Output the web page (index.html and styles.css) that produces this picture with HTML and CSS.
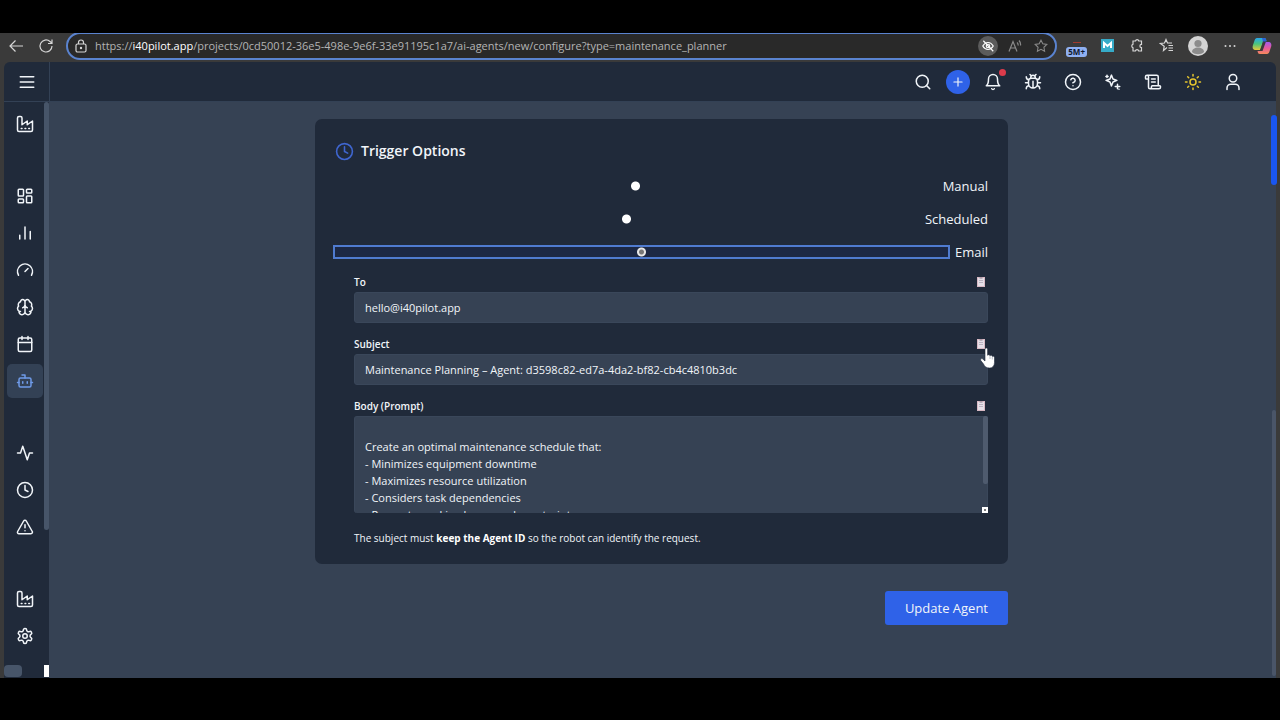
FILE: index.html
```html
<!DOCTYPE html>
<html lang="en">
<head>
  <meta charset="UTF-8" />
  <meta name="viewport" content="width=device-width, initial-scale=1.0"/>
  <title>Configure Agent</title>
  <link rel="stylesheet" href="styles.css">
</head>
<body>
  <!-- Browser bar -->
  <div class="browser-bar">
    <button class="bar-btn" aria-label="Back"><svg width="16" height="16" viewBox="0 0 16 16"><path d="M15 8H2M7.500 2.500L2 8l5.500 5.500"/></svg></button>
    <button class="bar-btn" aria-label="Reload"><svg width="16" height="16" viewBox="0 0 16 16"><path d="M14 8a6 6 0 1 1-2-4.500L14 5.300M14 1.500v4h-4"/></svg></button>
    <div class="address">
      <svg width="14" height="14" viewBox="0 0 14 14"><rect x="2" y="5" width="10" height="8" rx="1.500"/><path d="M4.500 5V3.500a2.500 2.500 0 0 1 5 0V5"/><circle cx="7" cy="9" r=".6"/></svg>
      <div class="url">https://<span>i40pilot.app</span>/projects/0cd50012-36e5-498e-9e6f-33e91195c1a7/ai-agents/new/configure?type=maintenance_planner</div>
      <button class="eye-btn" aria-label="Tracking prevention"><svg width="14" height="14" viewBox="0 0 24 24"><path d="M3 12s3.500-6 9-6 9 6 9 6-3.500 6-9 6-9-6-9-6z"/><circle cx="12" cy="12" r="3"/><path d="M4 3l17 18"/></svg></button>
      <button class="bar-btn dim" aria-label="Read aloud"><svg width="14" height="14" viewBox="0 0 14 14"><path d="M1 12.500L5 2.500l4 10M2.500 9h5M9 3.500a3 3 0 0 1 1 3M11 1.500a6 6 0 0 1 1.500 5"/></svg></button>
      <button class="bar-btn dim" aria-label="Favorite"><svg width="14" height="14" viewBox="0 0 24 24"><path class="thick" d="M12 2l3.100 6.300 6.900 1-5 4.900 1.200 6.800-6.200-3.200L5.800 21 7 14.200 2 9.300l6.900-1z"/></svg></button>
    </div>
    <div class="extensions">
      <div class="counter"><i></i><span>5M+</span></div>
      <div class="m-ext"><svg width="13" height="13" viewBox="0 0 13 13"><path d="M3 9V4l3.500 3L10 4v5"/></svg></div>
      <button class="bar-btn" aria-label="Extensions"><svg width="15" height="15" viewBox="0 0 15 15"><path d="M4 3h2.500a1.700 1.700 0 0 1 3.300 0H12.500v3.300a1.600 1.600 0 0 0 0 3.200V13H9.700a1.700 1.700 0 0 0-3.300 0H4V9.700a1.800 1.800 0 0 1 0-3.400z"/></svg></button>
      <button class="bar-btn" aria-label="Favorites"><svg width="15" height="15" viewBox="0 0 15 15"><path d="M8 9.500l-3.500 3 .7-4.300L1.500 5.500l4-.5L7 1.500 8.500 5H13M9.500 7.500H14M9.500 10H14M9.500 12.500H14"/></svg></button>
      <div class="avatar"><svg width="20" height="20" viewBox="0 0 20 20"><circle cx="10" cy="10" r="10" fill="#d4d4d4"/><circle cx="10" cy="7.500" r="3.600" fill="#8c8c8c"/><path d="M4 16c0-6 12-6 12 0-3 3-9 3-12 0z" fill="#8c8c8c"/></svg></div>
      <button class="bar-btn" aria-label="More"><svg width="14" height="14" viewBox="0 0 14 14"><circle class="dot" cx="2.500" cy="7" r="1"/><circle class="dot" cx="7" cy="7" r="1"/><circle class="dot" cx="11.500" cy="7" r="1"/></svg></button>
      <div class="copilot">
        <svg width="20" height="18" viewBox="0 0 20 18">
          <defs>
            <linearGradient id="cpA" x1="0" y1="0" x2="0" y2="1"><stop offset="0" stop-color="#28a8ee"/><stop offset=".5" stop-color="#4cc47a"/><stop offset="1" stop-color="#e8c83c"/></linearGradient>
            <linearGradient id="cpB" x1="0" y1="0" x2="0" y2="1"><stop offset="0" stop-color="#a35af0"/><stop offset=".5" stop-color="#e65a9c"/><stop offset="1" stop-color="#f58a5a"/></linearGradient>
          </defs>
          <path d="M6 1h6c2 0 2 1 2.500 3H11L8.500 13H4C1 13 0 11 1 8l1.700-5C3.300 1.500 4 1 6 1z" fill="url(#cpA)"/>
          <path d="M14 17H8c-2 0-2-1-2.500-3H9l2.500-9H16c3 0 4 2 3 5l-1.700 5c-.6 1.500-1.300 2-3.300 2z" fill="url(#cpB)"/>
          <path d="M11.500 4.500H14L10.500 14H7.500z" fill="#3b3b3b"/>
          <path d="M10 1h2c2 0 2 1 2.500 3.500H11z" fill="#2b62d8"/>
        </svg>
      </div>
    </div>
  </div>

  <div class="app">
    <header class="topbar">
      <button class="menu-btn" aria-label="Menu"><svg class="icon" viewBox="0 0 24 24"><path d="M3 5h18M3 12h18M3 19h18"/></svg></button>
      <div class="actions">
        <div class="quick">
          <button aria-label="Search"><svg class="icon" viewBox="0 0 24 24"><circle cx="11" cy="11" r="8"/><path d="M21 21l-4.300-4.300"/></svg></button>
          <button class="add-btn" aria-label="Add"><svg class="icon" viewBox="0 0 24 24"><path d="M5 12h14M12 5v14"/></svg></button>
          <button class="bell-btn" aria-label="Notifications"><svg class="icon" viewBox="0 0 24 24"><path d="M6 8a6 6 0 0 1 12 0c0 7 3 9 3 9H3s3-2 3-9M10.300 21a1.940 1.940 0 0 0 3.400 0"/></svg><span class="badge"></span></button>
        </div>
        <button aria-label="Report bug"><svg class="icon" viewBox="0 0 24 24"><path d="M8 2l1.900 1.900M14.100 3.900L16 2M9 7.100V6a3 3 0 1 1 6 0v1.100M12 20a6 6 0 0 1-6-6v-3a4 4 0 0 1 4-4h4a4 4 0 0 1 4 4v3a6 6 0 0 1-6 6zM12 20v-9M6.500 9C4.600 8.800 3 7.100 3 5M6 13H2M3 21c0-2.100 1.700-3.900 3.800-4M21 5c0 2.100-1.600 3.800-3.500 4M22 13h-4M17.200 17c2.100.1 3.800 1.900 3.800 4"/></svg></button>
        <button aria-label="Help"><svg class="icon" viewBox="0 0 24 24"><circle cx="12" cy="12" r="10"/><path d="M9.100 9a3 3 0 0 1 5.800 1c0 2-3 3-3 3M12 17h.010"/></svg></button>
        <button aria-label="Assistant"><svg class="icon" viewBox="0 0 24 24"><path d="M9.900 2.800L8 8 2.800 9.900 8 12l1.900 5.200L12 12l5.200-2.100L12 8zM18 15v6M15 18h6M20 21.500v.010M4 3v3M2.500 4.500h3"/></svg></button>
        <button aria-label="Logs"><svg class="icon" viewBox="0 0 24 24"><path d="M15 12h-5M15 8h-5M19 17V5a2 2 0 0 0-2-2H4M8 21h12a2 2 0 0 0 2-2v-1a1 1 0 0 0-1-1H11a1 1 0 0 0-1 1v1a2 2 0 1 1-4 0V5a2 2 0 1 0-4 0v2a1 1 0 0 0 1 1h3"/></svg></button>
        <button class="theme-btn" aria-label="Theme"><svg class="icon" viewBox="0 0 24 24"><circle cx="12" cy="12" r="4"/><path d="M12 2v2M12 20v2M4.900 4.900l1.400 1.400M17.700 17.700l1.400 1.400M2 12h2M20 12h2M6.300 17.700l-1.400 1.400M19.100 4.900l-1.400 1.400"/></svg></button>
        <button aria-label="Account"><svg class="icon" viewBox="0 0 24 24"><circle cx="12" cy="7" r="5"/><path d="M20 22v-2a5 5 0 0 0-5-5H9a5 5 0 0 0-5 5v2"/></svg></button>
      </div>
    </header>

    <div class="body-row">
      <nav class="sidebar">
        <div class="group">
          <a href="#" aria-label="Plant"><svg class="icon" viewBox="0 0 24 24"><path d="M2 20a2 2 0 0 0 2 2h16a2 2 0 0 0 2-2V8l-7 5V8l-7 5V4a2 2 0 0 0-2-2H4a2 2 0 0 0-2 2zM17 18h1M12 18h1M7 18h1"/></svg></a>
        </div>
        <div class="group">
          <a href="#" aria-label="Dashboard"><svg class="icon" viewBox="0 0 24 24"><rect x="3" y="3" width="7" height="9" rx="1"/><rect x="14" y="3" width="7" height="5" rx="1"/><rect x="14" y="12" width="7" height="9" rx="1"/><rect x="3" y="16" width="7" height="5" rx="1"/></svg></a>
          <a href="#" aria-label="Reports"><svg class="icon" viewBox="0 0 24 24"><path d="M5 20v-5M12 20V4M19 20V10"/></svg></a>
          <a href="#" aria-label="Performance"><svg class="icon" viewBox="0 0 24 24"><path d="M12 14l4-4M3.340 19a10 10 0 1 1 17.320 0"/></svg></a>
          <a href="#" aria-label="Models"><svg class="icon" viewBox="0 0 24 24"><path d="M12 5a3 3 0 1 0-6 .1 4 4 0 0 0-2.500 5.800 4 4 0 0 0 .6 6.600A4 4 0 1 0 12 18zM12 5a3 3 0 1 1 6 .1 4 4 0 0 1 2.500 5.800 4 4 0 0 1-.6 6.600A4 4 0 1 1 12 18zM15 13a4.500 4.500 0 0 1-3-4 4.500 4.500 0 0 1-3 4M6 18a4 4 0 0 1-2-.5M20 17.500a4 4 0 0 1-2 .5"/></svg></a>
          <a href="#" aria-label="Calendar"><svg class="icon" viewBox="0 0 24 24"><rect x="3" y="4" width="18" height="18" rx="2"/><path d="M8 2v4M16 2v4M3 10h18"/></svg></a>
          <a href="#" class="active" aria-label="AI Agents"><svg class="icon" viewBox="0 0 24 24"><path d="M12 8V4H8M2 14h2M20 14h2M15 13v2M9 13v2"/><rect x="4" y="8" width="16" height="12" rx="2"/></svg></a>
        </div>
        <div class="group">
          <a href="#" aria-label="Activity"><svg class="icon" viewBox="0 0 24 24"><path d="M22 12h-4l-3 9L9 3l-3 9H2"/></svg></a>
          <a href="#" aria-label="History"><svg class="icon" viewBox="0 0 24 24"><circle cx="12" cy="12" r="10"/><path d="M12 6v6l4 2"/></svg></a>
          <a href="#" aria-label="Alerts"><svg class="icon" viewBox="0 0 24 24"><path d="M21.700 18l-8-14a2 2 0 0 0-3.500 0l-8 14A2 2 0 0 0 4 21h16a2 2 0 0 0 1.700-3zM12 9v4M12 17h.010"/></svg></a>
        </div>
        <div class="group">
          <a href="#" aria-label="Sites"><svg class="icon" viewBox="0 0 24 24"><path d="M2 20a2 2 0 0 0 2 2h16a2 2 0 0 0 2-2V8l-7 5V8l-7 5V4a2 2 0 0 0-2-2H4a2 2 0 0 0-2 2zM17 18h1M12 18h1M7 18h1"/></svg></a>
          <a href="#" aria-label="Settings"><svg class="icon" viewBox="0 0 24 24"><path d="M12.200 2h-.4a2 2 0 0 0-2 2v.2a2 2 0 0 1-1 1.700l-.4.300a2 2 0 0 1-2 0l-.2-.1a2 2 0 0 0-2.700.7l-.2.400a2 2 0 0 0 .7 2.700l.2.100a2 2 0 0 1 1 1.700v.5a2 2 0 0 1-1 1.800l-.2.100a2 2 0 0 0-.7 2.700l.2.400a2 2 0 0 0 2.700.7l.2-.1a2 2 0 0 1 2 0l.4.300a2 2 0 0 1 1 1.700v.2a2 2 0 0 0 2 2h.4a2 2 0 0 0 2-2v-.2a2 2 0 0 1 1-1.700l.4-.3a2 2 0 0 1 2 0l.2.100a2 2 0 0 0 2.700-.7l.2-.4a2 2 0 0 0-.7-2.700l-.2-.1a2 2 0 0 1-1-1.800v-.5a2 2 0 0 1 1-1.700l.2-.1a2 2 0 0 0 .7-2.700l-.2-.4a2 2 0 0 0-2.700-.7l-.2.100a2 2 0 0 1-2 0l-.4-.3a2 2 0 0 1-1-1.700V4a2 2 0 0 0-2-2z"/><circle cx="12" cy="12" r="3"/></svg></a>
        </div>
        <span class="side-thumb"></span>
        <span class="side-hthumb"></span>
        <span class="side-corner"></span>
      </nav>

      <main class="content">
        <form class="agent-form">
          <section class="card">
            <h2><svg class="icon" viewBox="0 0 24 24"><circle cx="12" cy="12" r="10"/><path d="M12 6v6l4 2"/></svg>Trigger Options</h2>
            <div class="options">
              <label class="option"><input type="radio" name="trigger">Manual</label>
              <label class="option"><input type="radio" name="trigger">Scheduled</label>
              <label class="option"><input type="radio" name="trigger" checked>Email</label>
            </div>
            <div class="fields">
              <div class="field">
                <div class="field-head"><label for="to">To</label><button type="button" class="copy-btn" aria-label="Copy"><svg width="8" height="10" viewBox="0 0 8 10"><rect width="8" height="10" fill="#d8b9c4"/><rect x="1" y="1" width="6" height="8" fill="#e6e0e8"/><path d="M2 3.500h4M2 5.500h4" stroke="#a99fb0" stroke-width=".7"/><path d="M2.500 1h3" stroke="#8d7f8c"/></svg></button></div>
                <input type="text" id="to" value="hello@i40pilot.app">
              </div>
              <div class="field">
                <div class="field-head"><label for="subject">Subject</label><button type="button" class="copy-btn" aria-label="Copy"><svg width="8" height="10" viewBox="0 0 8 10"><rect width="8" height="10" fill="#d8b9c4"/><rect x="1" y="1" width="6" height="8" fill="#e6e0e8"/><path d="M2 3.500h4M2 5.500h4" stroke="#a99fb0" stroke-width=".7"/><path d="M2.500 1h3" stroke="#8d7f8c"/></svg></button>
                  <svg class="pointer" width="16" height="21" viewBox="0 0 16 21"><path d="M5 1.500c0-2 2.600-2 2.600 0v5.800c.4-1 2.300-.8 2.400.5.500-.9 2.200-.6 2.300.7.700-.7 2.200-.2 2.200 1.200v4.800c0 3.500-2 5.500-5 5.500-3.500 0-4.800-1.500-6-4L.8 12.600c-.8-1.500.8-2.600 2-1.600L5 13z" fill="#fff" stroke="#1e293b" stroke-width=".6"/><path d="M10 8v3M12.300 9v2.500" stroke="#8a93a3" stroke-width=".6"/></svg>
                </div>
                <input type="text" id="subject" value="Maintenance Planning – Agent: d3598c82-ed7a-4da2-bf82-cb4c4810b3dc">
              </div>
              <div class="field body-field">
                <div class="field-head"><label for="body">Body (Prompt)</label><button type="button" class="copy-btn" aria-label="Copy"><svg width="8" height="10" viewBox="0 0 8 10"><rect width="8" height="10" fill="#d8b9c4"/><rect x="1" y="1" width="6" height="8" fill="#e6e0e8"/><path d="M2 3.500h4M2 5.500h4" stroke="#a99fb0" stroke-width=".7"/><path d="M2.500 1h3" stroke="#8d7f8c"/></svg></button></div>
                <textarea id="body">

Create an optimal maintenance schedule that:
- Minimizes equipment downtime
- Maximizes resource utilization
- Considers task dependencies
- Respects working hours and constraints</textarea>
                <span class="text-thumb"></span>
                <span class="text-grip"></span>
              </div>
              <p class="hint">The subject must <strong>keep the Agent ID</strong> so the robot can identify the request.</p>
            </div>
          </section>
          <button type="button" class="submit-btn">Update Agent</button>
        </form>
      </main>
      <span class="page-thumb"></span>
      <span class="page-marker"></span>
    </div>
  </div>
</body>
</html>
```
FILE: styles.css
```css
* {
  box-sizing: border-box;
}
body {
  margin: 0;
  min-height: 100vh;
  padding: 33px 0 42px;
  display: flex;
  flex-direction: column;
  background-color: #000;
  color: #f1f5f9;
  font-family: 'Open Sans', 'Noto Sans', sans-serif;
  font-size: 11px;
}
button {
  display: flex;
  align-items: center;
  justify-content: center;
  padding: 0;
  border: 0;
  background: none;
  color: inherit;
  font-family: inherit;
}
.icon {
  display: block;
  flex: none;
  width: 18px;
  height: 18px;
  fill: none;
  stroke: currentColor;
  stroke-width: 2;
  stroke-linecap: round;
  stroke-linejoin: round;
}

/* Browser bar */
.browser-bar {
  display: flex;
  align-items: center;
  height: 29px;
  padding: 0 8px 4px;
  overflow: hidden;
  background-color: #3a3a3a;
  color: #d6d6d6;
}
.bar-btn {
  width: 16px;
  height: 16px;
  margin-right: 14px;
}
.browser-bar svg {
  display: block;
  fill: none;
  stroke: currentColor;
  stroke-width: 1.2;
}
.browser-bar .thick {
  stroke-width: 1.8;
}
.browser-bar .dot {
  fill: currentColor;
  stroke: none;
}
.address {
  flex: 1;
  display: flex;
  align-items: center;
  height: 28px;
  padding: 0 6px;
  margin: 0 9px 0 -2px;
  border: 2px solid #5a83cf;
  border-radius: 14px;
  background-color: #292929;
}
.url {
  flex: 1;
  margin-left: 7px;
  color: #b4b4b4;
  white-space: nowrap;
}
.url span {
  color: #fff;
}
.eye-btn {
  width: 20px;
  height: 20px;
  margin-right: 9px;
  border-radius: 50%;
  background-color: #5c5c5c;
  color: #fff;
}
.browser-bar .eye-btn svg {
  stroke-width: 2;
}
.address .dim {
  margin-right: 10px;
  color: #8a8a8a;
}
.address .dim:last-child {
  margin-right: 0;
}
.extensions {
  display: flex;
  align-items: center;
  gap: 14px;
}
.extensions .bar-btn {
  margin: 0;
}
.counter {
  display: flex;
  flex-direction: column;
  align-items: center;
  gap: 4px;
  padding-top: 8px;
}
.counter i {
  width: 8px;
  height: 1px;
  background-color: #a33a2c;
}
.counter span {
  padding: 0 2px;
  border-radius: 3px;
  background-color: #8fb0f2;
  color: #10182c;
  font-size: 8px;
  font-weight: 700;
  line-height: 10px;
}
.m-ext {
  background-color: #36abc8;
  color: #fff;
}
.browser-bar .m-ext svg {
  stroke-width: 2;
}
.browser-bar .avatar svg,
.browser-bar .copilot svg {
  stroke: none;
}

/* App */
.app {
  flex: 1;
  display: flex;
  flex-direction: column;
  padding: 0 4px;
  background-color: #3a3a3a;
}
.topbar {
  display: flex;
  justify-content: space-between;
  height: 40px;
  border-bottom: 1px solid #334155;
  border-radius: 6px 6px 0 0;
  background-color: #202a3a;
}
.menu-btn {
  width: 46px;
  border-right: 1px solid #334155;
}
.actions {
  display: flex;
  align-items: center;
  gap: 20px;
  padding-right: 33px;
}
.actions button {
  width: 20px;
  height: 24px;
}
.actions .icon {
  width: 18px;
  height: 18px;
}
.quick {
  display: flex;
  align-items: center;
  gap: 13px;
}
.actions .add-btn {
  width: 24px;
  border-radius: 50%;
  background-color: #2f62e8;
}
.actions .add-btn .icon {
  width: 14px;
  height: 14px;
}
.bell-btn {
  position: relative;
}
.badge {
  position: absolute;
  top: -1px;
  right: -3px;
  width: 7px;
  height: 7px;
  border-radius: 50%;
  background-color: #dc3b4b;
}
.theme-btn {
  color: #e6c62e;
}
.body-row {
  position: relative;
  flex: 1;
  display: flex;
}
.sidebar {
  position: relative;
  width: 45px;
  padding: 5px 5px 25px 3px;
  display: flex;
  flex-direction: column;
  gap: 38px;
  background-color: #202a3a;
}
.group {
  display: flex;
  flex-direction: column;
  gap: 3px;
}
.group a {
  display: flex;
  align-items: center;
  justify-content: center;
  width: 36px;
  height: 34px;
  border-radius: 5px;
  color: #f1f5f9;
}
.group .active {
  background-color: #334155;
  color: #6f9ae8;
}
.side-thumb {
  position: absolute;
  top: 0;
  right: 0;
  width: 5px;
  height: 428px;
  border-radius: 3px;
  background-color: #475569;
}
.side-hthumb {
  position: absolute;
  left: 0;
  bottom: 1px;
  width: 18px;
  height: 12px;
  border-radius: 4px;
  background-color: #475569;
}
.side-corner {
  position: absolute;
  right: 0;
  bottom: 1px;
  width: 5px;
  height: 12px;
  background-color: #fff;
}
.content {
  flex: 1;
  padding: 17px 22px 20px 20px;
  background-color: #364254;
}
.page-thumb {
  position: absolute;
  right: 0;
  bottom: 2px;
  width: 4px;
  height: 266px;
  border-radius: 2px;
  background-color: #4a5568;
}
.page-marker {
  position: absolute;
  top: 13px;
  right: -1px;
  width: 6px;
  height: 70px;
  border-radius: 3px;
  background-color: #1a56f0;
}

/* Trigger form */
.agent-form {
  display: flex;
  flex-direction: column;
  align-items: flex-end;
  gap: 27px;
  max-width: 693px;
  margin: 0 auto;
}
.card {
  width: 100%;
  padding: 20px 20px 16px;
  border-radius: 7px;
  background-color: #202a3a;
}
.card h2 {
  display: flex;
  align-items: center;
  gap: 7px;
  margin: 0 0 13px;
  font-size: 14px;
  font-weight: 600;
  line-height: 24px;
}
.card h2 .icon {
  width: 19px;
  height: 19px;
  color: #3f66d0;
}
.options {
  display: flex;
  flex-direction: column;
  gap: 13px;
}
.option {
  display: flex;
  align-items: center;
  gap: 7px;
  font-size: 13px;
  line-height: 20px;
}
.option input {
  appearance: none;
  flex: 1;
  height: 10px;
  margin: 0;
  background: radial-gradient(circle at center, #fff 4px, transparent 5px);
}
.option input:checked {
  outline: 2px solid #4f7bd0;
  background: radial-gradient(circle at center, #777 2px, #e6e6e6 3px, #e6e6e6 4px, #1c2844 5px);
}
.fields {
  display: flex;
  flex-direction: column;
  gap: 11px;
  margin: 10px 0 0 19px;
}
.field {
  display: flex;
  flex-direction: column;
}
.field-head {
  position: relative;
  display: flex;
  align-items: center;
  justify-content: space-between;
  height: 20px;
  padding-right: 3px;
}
.field-head label {
  font-size: 10px;
  font-weight: 600;
}
.field input,
.field textarea {
  width: 100%;
  height: 31px;
  padding: 0 10px;
  border: 1px solid #3a475a;
  border-radius: 3px;
  outline: 0;
  background-color: #364254;
  color: #f1f5f9;
  font-family: inherit;
  font-size: 11px;
}
.field textarea {
  display: block;
  height: 97px;
  padding: 4px 10px 0;
  border-bottom: 0;
  line-height: 17px;
  resize: none;
  overflow: hidden;
}
.body-field {
  position: relative;
}
.text-thumb {
  position: absolute;
  top: 20px;
  right: 0;
  width: 5px;
  height: 68px;
  border-radius: 2px;
  background-color: #4f5b6e;
}
.text-grip {
  position: absolute;
  right: 0;
  bottom: 0;
  width: 6px;
  height: 6px;
  border: 2px solid #fff;
  background-color: #777;
}
.pointer {
  position: absolute;
  top: 14px;
  right: -8px;
  z-index: 1;
}
.hint {
  margin: 4px 0 0;
  font-size: 10px;
  line-height: 20px;
}
.hint strong {
  color: #fff;
}
.submit-btn {
  height: 34px;
  padding: 0 20px;
  border-radius: 3px;
  background-color: #2f62e8;
  font-size: 13px;
}
```
